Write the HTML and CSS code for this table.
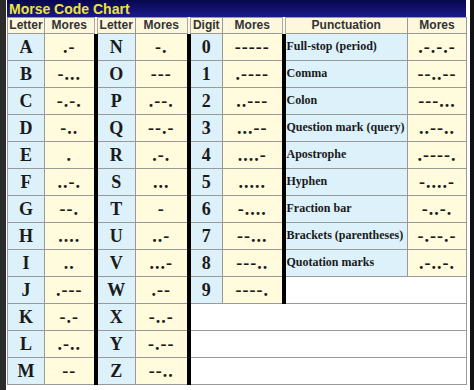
FILE: index.html
```html
<!DOCTYPE html>
<html>
<head>
	<meta charset="utf-8">
	<link rel="stylesheet" href="styles.css">
</head>
<body>
	<div class="edge"></div>
	<div id="chart">
		<!-- chart heading -->
		<div class="title">Morse Code Chart</div>

		<table>
			<colgroup>
				<col class="w-let"><col class="w-mor">
				<col class="w-let2"><col class="w-mor2">
				<col class="w-dig"><col class="w-mor3">
				<col class="w-pun"><col class="w-mor4">
			</colgroup>
			<tr class="head">
				<th>Letter</th><th>Mores</th>
				<th class="hsep">Letter</th><th>Mores</th>
				<th class="hsep">Digit</th><th>Mores</th>
				<th class="hsep">Punctuation</th><th>Mores</th>
			</tr>
			<tr>
				<td class="let">A</td><td class="mor">.-</td>
				<td class="let sep">N</td><td class="mor">-.</td>
				<td class="let sep">0</td><td class="mor">-----</td>
				<td class="pun sep">Full-stop (period)</td><td class="mor">.-.-.-</td>
			</tr>
			<tr>
				<td class="let">B</td><td class="mor">-...</td>
				<td class="let sep">O</td><td class="mor">---</td>
				<td class="let sep">1</td><td class="mor">.----</td>
				<td class="pun sep">Comma</td><td class="mor">--..--</td>
			</tr>
			<tr>
				<td class="let">C</td><td class="mor">-.-.</td>
				<td class="let sep">P</td><td class="mor">.--.</td>
				<td class="let sep">2</td><td class="mor">..---</td>
				<td class="pun sep">Colon</td><td class="mor">---...</td>
			</tr>
			<tr>
				<td class="let">D</td><td class="mor">-..</td>
				<td class="let sep">Q</td><td class="mor">--.-</td>
				<td class="let sep">3</td><td class="mor">...--</td>
				<td class="pun sep">Question mark (query)</td><td class="mor">..--..</td>
			</tr>
			<tr>
				<td class="let">E</td><td class="mor">.</td>
				<td class="let sep">R</td><td class="mor">.-.</td>
				<td class="let sep">4</td><td class="mor">....-</td>
				<td class="pun sep">Apostrophe</td><td class="mor">.----.</td>
			</tr>
			<tr>
				<td class="let">F</td><td class="mor">..-.</td>
				<td class="let sep">S</td><td class="mor">...</td>
				<td class="let sep">5</td><td class="mor">.....</td>
				<td class="pun sep">Hyphen</td><td class="mor">-....-</td>
			</tr>
			<tr>
				<td class="let">G</td><td class="mor">--.</td>
				<td class="let sep">T</td><td class="mor">-</td>
				<td class="let sep">6</td><td class="mor">-....</td>
				<td class="pun sep">Fraction bar</td><td class="mor">-..-.</td>
			</tr>
			<tr>
				<td class="let">H</td><td class="mor">....</td>
				<td class="let sep">U</td><td class="mor">..-</td>
				<td class="let sep">7</td><td class="mor">--...</td>
				<td class="pun sep">Brackets (parentheses)</td><td class="mor">-.--.-</td>
			</tr>
			<tr>
				<td class="let">I</td><td class="mor">..</td>
				<td class="let sep">V</td><td class="mor">...-</td>
				<td class="let sep">8</td><td class="mor">---..</td>
				<td class="pun sep">Quotation marks</td><td class="mor">.-..-.</td>
			</tr>
			<tr>
				<td class="let">J</td><td class="mor">.---</td>
				<td class="let sep">W</td><td class="mor">.--</td>
				<td class="let sep">9</td><td class="mor">----.</td>
				<td class="blank sep" colspan="2"></td>
			</tr>
			<tr>
				<td class="let">K</td><td class="mor">-.-</td>
				<td class="let sep">X</td><td class="mor">-..-</td>
				<td class="blank sep" colspan="4"></td>
			</tr>
			<tr>
				<td class="let">L</td><td class="mor">.-..</td>
				<td class="let sep">Y</td><td class="mor">-.--</td>
				<td class="blank sep" colspan="4"></td>
			</tr>
			<tr>
				<td class="let">M</td><td class="mor">--</td>
				<td class="let sep">Z</td><td class="mor">--..</td>
				<td class="blank sep" colspan="4"></td>
			</tr>
		</table>
	</div>
	<div class="edge-right"></div>
</body>
</html>
```

FILE: styles.css
```css
body {
	margin: 0;
	height: 390px;
	display: flex;
	background: #fff;
	overflow: hidden;
}

/* dark borders of the screenshot */
.edge {
	width: 6px;
	background: #2c2c2c;
	margin-right: 1px;
}

.edge-right {
	width: 4px;
	margin-left: 4px;
	background: #111;
}

#chart {
	width: 459px;
}

/* chart heading */
.title {
	height: 17px;
	padding-left: 2px;
	background: linear-gradient(#07074c, #1a1a8c);
	color: #efe33e;
	font-family: "Liberation Sans", Arial, sans-serif;
	font-weight: bold;
	font-size: 14px;
	line-height: 18px;
}

table {
	width: 459px;
	table-layout: fixed;
	border-collapse: collapse;
	font-family: "Liberation Serif", "Times New Roman", serif;
	color: #1a1a1a;
}

.w-let { width: 37px; }
.w-mor { width: 51px; }
.w-let2 { width: 40px; }
.w-mor2 { width: 53px; }
.w-dig { width: 34px; }
.w-mor3 { width: 61px; }
.w-pun { width: 124px; }
.w-mor4 { width: 59px; }

th, td {
	border: 1px solid #999;
	padding: 0;
	text-align: center;
}

/* column titles */
.head th {
	height: 15px;
	background: #fdf8dc;
	font-family: "Liberation Sans", Arial, sans-serif;
	font-size: 12px;
	line-height: 13px;
	color: #333;
}

.head .hsep {
	border-left: 4px double #aaa;
}

td {
	height: 26px;
	line-height: 18px;
}

.let {
	background: #dcf1fa;
	font-size: 18px;
	font-weight: bold;
}

.mor {
	background: #fffbdc;
	font-size: 18px;
	font-weight: bold;
	letter-spacing: 1px;
}

.pun {
	height: 23px;
	background: #dcf1fa;
	text-align: left;
	padding-left: 1px;
	padding-bottom: 3px;
	font-size: 12px;
	line-height: 14px;
	font-weight: bold;
	white-space: nowrap;
}

.blank {
	background: #fff;
}

/* thick black column separators */
.sep {
	border-left: 4px solid #000;
}
```
